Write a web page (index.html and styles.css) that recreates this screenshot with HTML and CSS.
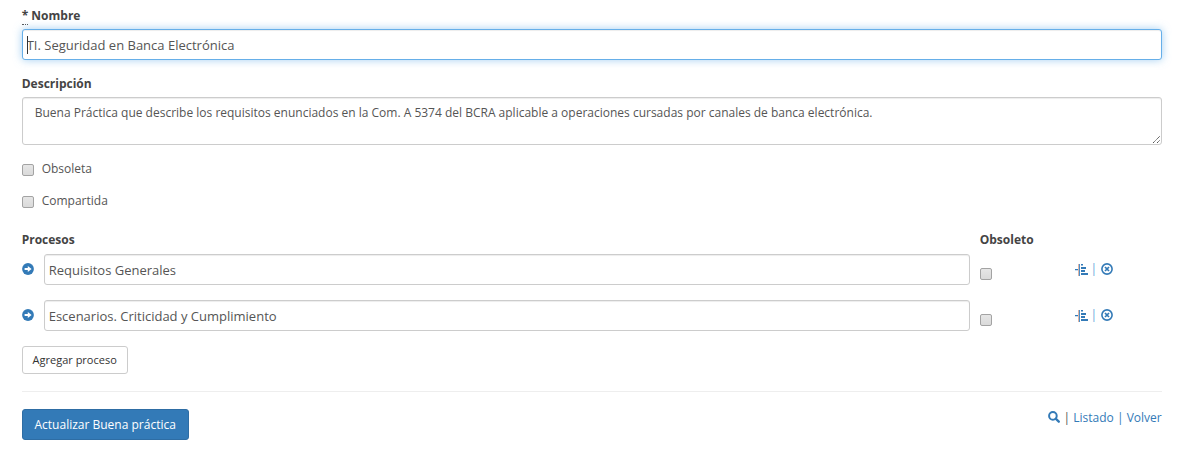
FILE: index.html
```html
<!DOCTYPE html>
<html lang="es">
<head>
<meta charset="utf-8">
<title>Buena práctica</title>
<link rel="stylesheet" href="styles.css">
</head>
<body>
<svg class="defs" width="0" height="0">
  <symbol id="arrow" viewBox="0 0 12 12"><circle cx="6" cy="6" r="5.9" fill="#337ab7"/><path d="M2.6 5h3.2V3l3.8 3-3.8 3V7H2.6z" fill="#fff"/></symbol>
  <symbol id="indent" viewBox="0 0 14 12"><path d="M0 5h3v1.3H0zM6 0h2v1.5H6zM6 3h5v2H6zM6 6h4v2H6zM6 9h7v2H6z" fill="#337ab7"/><path d="M3 0h1v12H3z" fill="#dfb5a5"/><path d="M4 0h1v12H4z" fill="#4a90cb"/></symbol>
  <symbol id="remove" viewBox="0 0 12 12"><circle cx="6" cy="6" r="5.1" fill="none" stroke="#337ab7" stroke-width="1.6"/><path d="M4 4l4 4M8 4L4 8" stroke="#337ab7" stroke-width="1.7"/></symbol>
  <symbol id="search" viewBox="0 0 12 12"><circle cx="4.9" cy="4.9" r="3.8" fill="none" stroke="#337ab7" stroke-width="2"/><path d="M7.7 7.7l3.1 3" stroke="#337ab7" stroke-width="2.3" stroke-linecap="round"/></symbol>
</svg>
<form class="form">
  <label class="label"><abbr class="required">*</abbr> Nombre</label>
  <div class="field">
    <input class="control focused" type="text" value="TI. Seguridad en Banca Electrónica">
    <span class="caret"></span>
  </div>
  <label class="label label-desc">Descripción</label>
  <div class="field">
    <textarea class="control area">Buena Práctica que describe los requisitos enunciados en la Com. A 5374 del BCRA aplicable a operaciones cursadas por canales de banca electrónica.</textarea>
    <svg class="grip" width="9" height="9" viewBox="0 0 9 9"><path d="M1 8L8 1M5 8l3-3" stroke="#555" stroke-width="1" stroke-dasharray="1.4 .4"/></svg>
  </div>
  <label class="check first"><input class="box" type="checkbox"><span>Obsoleta</span></label>
  <label class="check"><input class="box" type="checkbox"><span>Compartida</span></label>
  <div class="row head"><span class="name">Procesos</span><span>Obsoleto</span></div>
  <div class="row">
    <svg class="arrow"><use href="#arrow"/></svg>
    <input class="control process" type="text" value="Requisitos Generales">
    <input class="box obsolete" type="checkbox">
    <span class="actions"><svg class="indent"><use href="#indent"/></svg><i class="sep">|</i><svg class="icon"><use href="#remove"/></svg></span>
  </div>
  <div class="row">
    <svg class="arrow"><use href="#arrow"/></svg>
    <input class="control process" type="text" value="Escenarios. Criticidad y Cumplimiento">
    <input class="box obsolete" type="checkbox">
    <span class="actions"><svg class="indent"><use href="#indent"/></svg><i class="sep">|</i><svg class="icon"><use href="#remove"/></svg></span>
  </div>
  <button class="btn add" type="button">Agregar proceso</button>
  <hr class="rule">
  <div class="footer">
    <button class="btn primary" type="button">Actualizar Buena práctica</button>
    <div class="links"><svg class="icon search"><use href="#search"/></svg><span>| <a>Listado</a> <a>|</a> <a>Volver</a></span></div>
  </div>
</form>
</body>
</html>
```
FILE: styles.css
```css
* { box-sizing: border-box; }
body { margin: 0; background: #fff; color: #555; font: 12px/18px "Open Sans", sans-serif; }
.defs { position: absolute; }
svg { display: block; flex: none; }
.form { width: 1140px; margin-left: 21.7px; padding-top: 7px; }
.label { display: block; height: 22px; font-weight: 700; color: #444; }
.label-desc { margin-top: 15px; }
.required { display: inline-block; height: 18px; border-bottom: 1px dotted #555; text-decoration: none; }
.field { position: relative; }
.control { display: block; width: 100%; height: 31px; margin: 0; padding: 2px 4px; border: 1px solid #ccc; border-radius: 3px; background: #fff; box-shadow: inset 0 1px 1px rgba(0,0,0,.075); color: #555; font: 13px/18px "Open Sans", sans-serif; outline: 0; }
.focused { border-color: #66afe9; box-shadow: inset 0 1px 1px rgba(0,0,0,.075), 0 0 8px rgba(102,175,233,.6); }
.caret { position: absolute; left: 5px; top: 7px; width: 1px; height: 18px; background: #333; }
.area { height: 48px; padding: 6px 12px; resize: none; overflow: hidden; font-size: 12px; line-height: 18px; }
.grip { position: absolute; right: 1px; bottom: 1px; }
.box { appearance: none; width: 12px; height: 12px; margin: 0; border: 1px solid #a3a3a3; border-radius: 2px; background: linear-gradient(#e6e6e6, #dadada); flex: none; }
.check { display: flex; gap: 8px; height: 18px; margin-top: 14px; }
.check .box { margin-top: 4px; }
.check.first { margin-top: 15px; }
.row { display: flex; align-items: flex-start; height: 46px; }
.head { height: 23px; margin-top: 21px; font-weight: 700; color: #444; }
.name { width: 958px; }
.arrow { width: 12px; height: 12px; margin: 9px 10px 0 0; }
.process { width: 926px; }
.obsolete { margin: 14px 83px 0 10px; }
.actions { display: flex; padding-top: 6px; line-height: 18px; }
.indent { width: 14px; height: 12px; margin-top: 4px; }
.icon { width: 12px; height: 12px; margin-top: 3px; }
.sep { width: 12px; padding-right: 2px; text-align: center; font-style: normal; color: #67a9dc; }
.btn { display: block; padding: 0; border: 1px solid #ccc; border-radius: 3px; background: #fff; color: #333; font: 11px/16px "Open Sans", sans-serif; }
.add { width: 106px; height: 28px; }
.rule { height: 1px; margin: 17px 0; border: 0; background: #eee; }
.footer { display: flex; justify-content: space-between; }
.primary { width: 167px; height: 31px; border-color: #2e6da4; background: #337ab7; color: #fff; font-size: 12px; }
.links { display: flex; gap: 4px; color: #555; }
.search { margin-top: 2px; }
.links a { color: #337ab7; }
```
